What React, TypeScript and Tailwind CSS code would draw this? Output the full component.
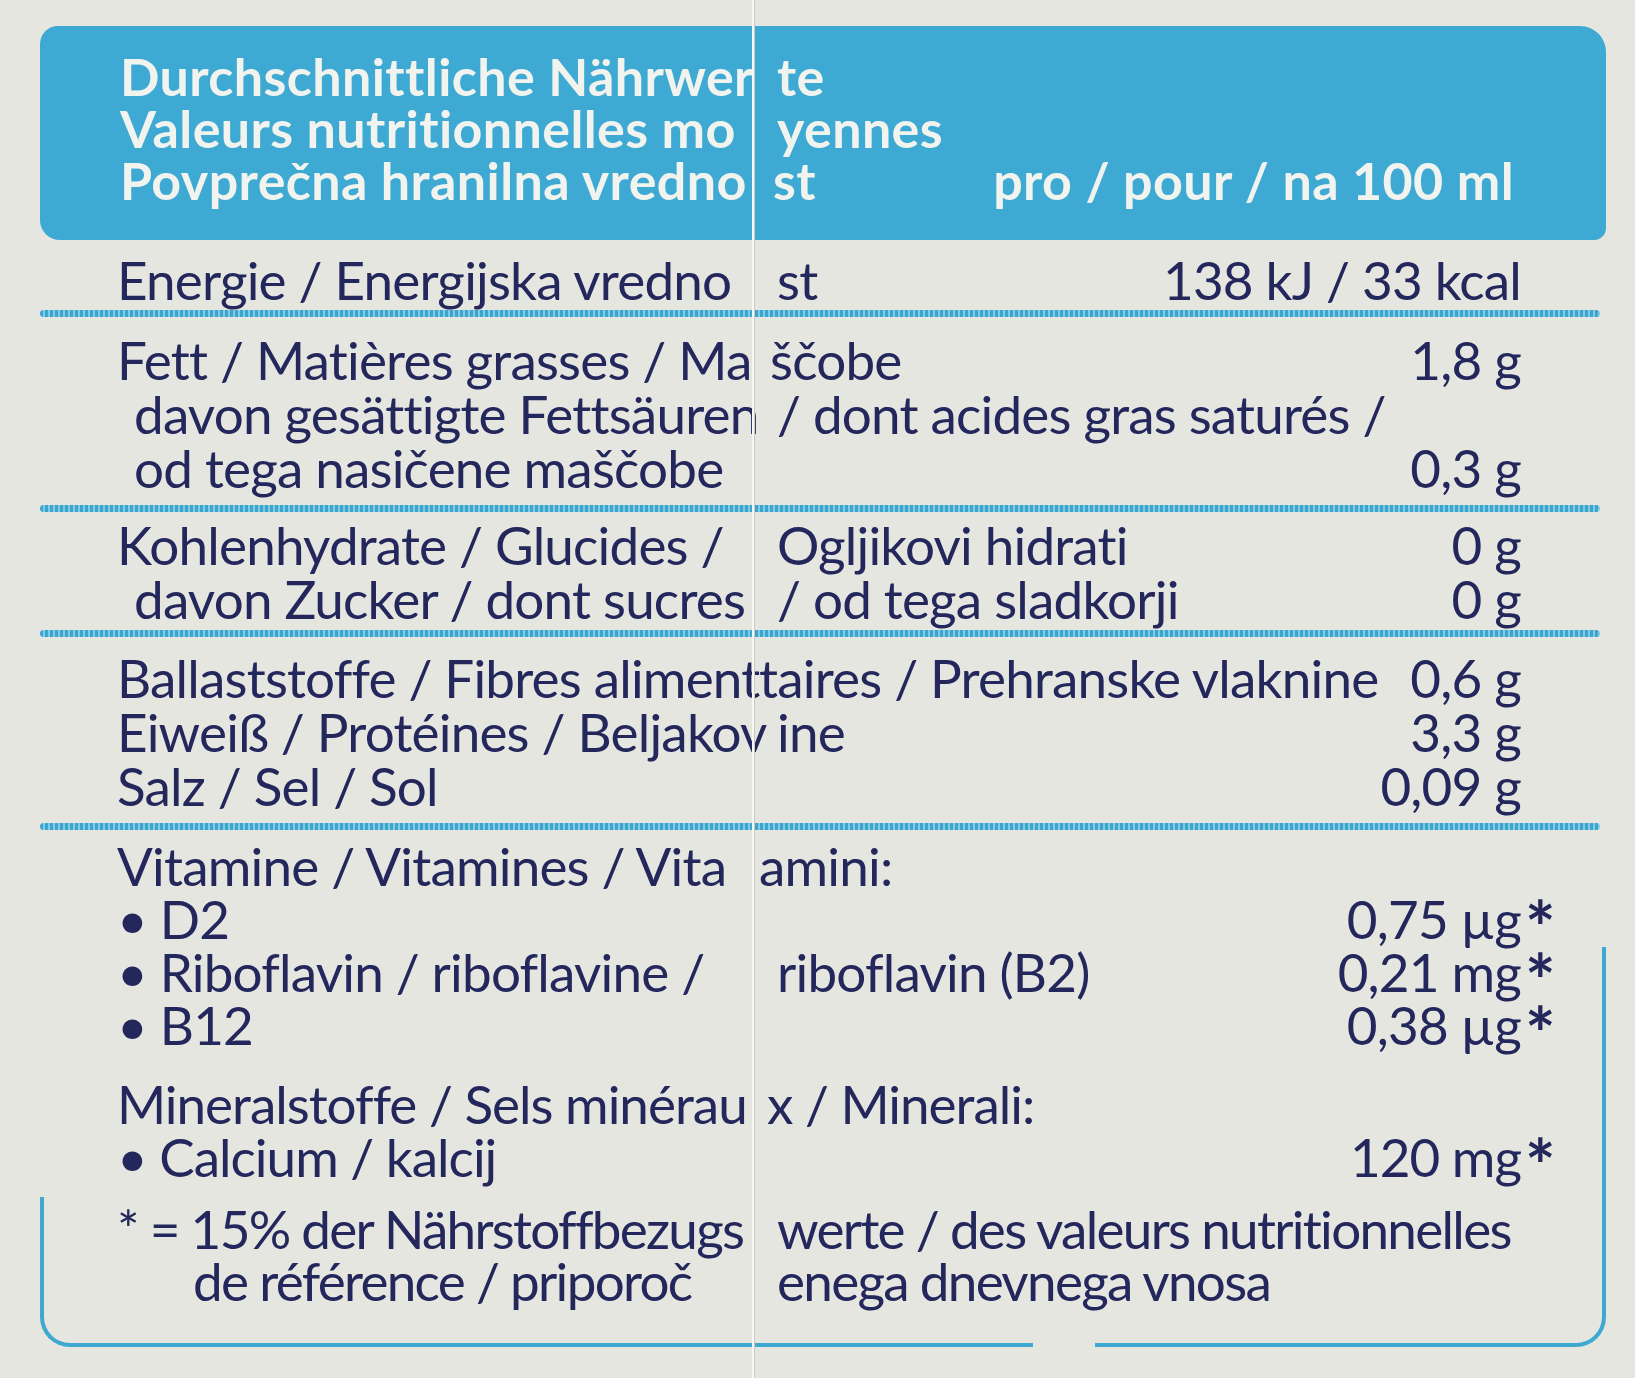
import React from "react"

type LineProps = {
  left?: string
  right?: string
  value?: string
  star?: boolean
  indent?: string
  rightPad?: string
  size?: string
}

function Line({
  left = "",
  right = "",
  value = "",
  star = false,
  indent = "pl-0",
  rightPad = "pl-[24px]",
  size = "h-[54px] leading-[54px] tracking-[-0.8px]",
}: LineProps) {
  return (
    <div className={`flex items-center ${size}`}>
      <div className="w-[713px] shrink-0 whitespace-nowrap pl-[77px]">
        <span className={`inline-block ${indent}`}>{left}</span>
      </div>
      <div className={`flex-1 whitespace-nowrap ${rightPad}`}>{right}</div>
      <div className="whitespace-nowrap text-right">{value}</div>
      <div className="relative h-full w-[85px] shrink-0">
        {star && (
          <span className="absolute left-[4px] top-[20px] h-[30px] text-[72px] font-bold leading-[30px]">*</span>
        )}
      </div>
    </div>
  )
}

function Divider({ className = "" }: { className?: string }) {
  return (
    <div
      className={`mr-[6px] h-[7px] rounded-full bg-[repeating-linear-gradient(90deg,#3aa6cf_0px,#3aa6cf_3px,#86c9e2_3px,#86c9e2_5px)] ${className}`}
    />
  )
}

const vit = "h-[53px] leading-[53px] tracking-[-0.8px]"
const tight = "h-[53px] leading-[53px] tracking-[-1px]"
const foot = "h-[52px] leading-[52px] tracking-[-1.7px]"

export default function App() {
  return (
    <div className="relative h-[1378px] w-[1635px] overflow-hidden bg-[#e5e6e0] font-['Lato',sans-serif] text-[53px] text-[#24275c]">
      <div className="pl-[40px] pr-[29px] pt-[26px]">
        {/* header band */}
        <div className="h-[214px] rounded-tl-[18px] rounded-tr-[26px] rounded-br-[12px] rounded-bl-[20px] bg-[#3ea9d3] pl-[80px] pt-[24px] text-[52px] font-bold leading-[52px] tracking-[0.4px] text-[#f1f3ef]">
          <div className="flex whitespace-nowrap">
            <span className="w-[645px] shrink-0">Durchschnittliche Nährwer</span>
            <span className="pl-[12px]">te</span>
          </div>
          <div className="flex whitespace-nowrap">
            <span className="w-[645px] shrink-0">Valeurs nutritionnelles mo</span>
            <span className="pl-[12px]">yennes</span>
          </div>
          <div className="flex whitespace-nowrap">
            <span className="w-[645px] shrink-0">Povprečna hranilna vredno</span>
            <span className="pl-[8px]">st</span>
            <span className="ml-auto pr-[92px]">pro / pour / na 100 ml</span>
          </div>
        </div>

        <div className="mt-[13px]">
          <Line left="Energie / Energijska vredno" right="st" value="138 kJ / 33 kcal" />
        </div>
        <Divider className="mt-[3px]" />

        <div className="mt-[16px]">
          <Line left="Fett / Matières grasses / Ma" right="ščobe" rightPad="pl-[17px]" value="1,8 g" />
          <Line left="davon gesättigte Fettsäuren" indent="pl-[17px]" right="/ dont acides gras saturés /" />
          <Line left="od tega nasičene maščobe" indent="pl-[17px]" value="0,3 g" />
        </div>
        <Divider className="mt-[10px]" />

        <div className="mt-[6px]">
          <Line left="Kohlenhydrate / Glucides /" right="Ogljikovi hidrati" value="0 g" />
          <Line left="davon Zucker / dont sucres" indent="pl-[17px]" right="/ od tega sladkorji" value="0 g" />
        </div>
        <Divider className="mt-[4px]" />

        <div className="mt-[14px]">
          <Line left="Ballaststoffe / Fibres aliment" right="taires / Prehranske vlaknine" rightPad="pl-[6px]" value="0,6 g" />
          <Line left="Eiweiß / Protéines / Beljakov" right="ine" value="3,3 g" />
          <Line left="Salz / Sel / Sol" value="0,09 g" />
        </div>
        <Divider className="mt-[10px]" />

        {/* framed lower part */}
        <div className="relative mt-[9px] pb-[40px]">
          <Line size={vit} left="Vitamine / Vitamines / Vita" right="amini:" rightPad="pl-[6px]" />
          <Line size={vit} left="• D2" value="0,75 µg" star />
          <Line size={vit} left="• Riboflavin / riboflavine /" right="riboflavin (B2)" value="0,21 mg" star />
          <Line size={vit} left="• B12" value="0,38 µg" star />

          <div className="mt-[26px]">
            <Line size={tight} left="Mineralstoffe / Sels minérau" right="x / Minerali:" rightPad="pl-[14px]" />
            <Line size={tight} left="• Calcium / kalcij" value="120 mg" star />
          </div>

          <div className="mt-[20px]">
            <Line size={foot} left="* = 15% der Nährstoffbezugs" right="werte / des valeurs nutritionnelles" />
            <Line size={foot} left="de référence / priporoč" indent="pl-[76px]" right="enega dnevnega vnosa" />
          </div>

          {/* frame edges */}
          <div className="absolute bottom-0 left-0 h-[150px] w-[34px] rounded-bl-[30px] border-b-[4px] border-l-[4px] border-[#3ea8d0]" />
          <div className="absolute bottom-0 left-[34px] right-[34px] h-[4px] bg-[#3ea8d0]" />
          <div className="absolute bottom-0 right-0 h-[400px] w-[34px] rounded-br-[30px] border-b-[4px] border-r-[4px] border-[#3ea8d0]" />
          {/* gap in bottom frame */}
          <div className="absolute bottom-[-2px] left-[993px] h-[8px] w-[62px] bg-[#e5e6e0]" />
        </div>
      </div>

      {/* carton fold */}
      <div className="absolute left-[752px] top-0 h-full w-[2px] bg-[#f7f8f4]" />
      <div className="absolute left-[754px] top-0 h-full w-px bg-[#c8cac4]" />
    </div>
  )
}
